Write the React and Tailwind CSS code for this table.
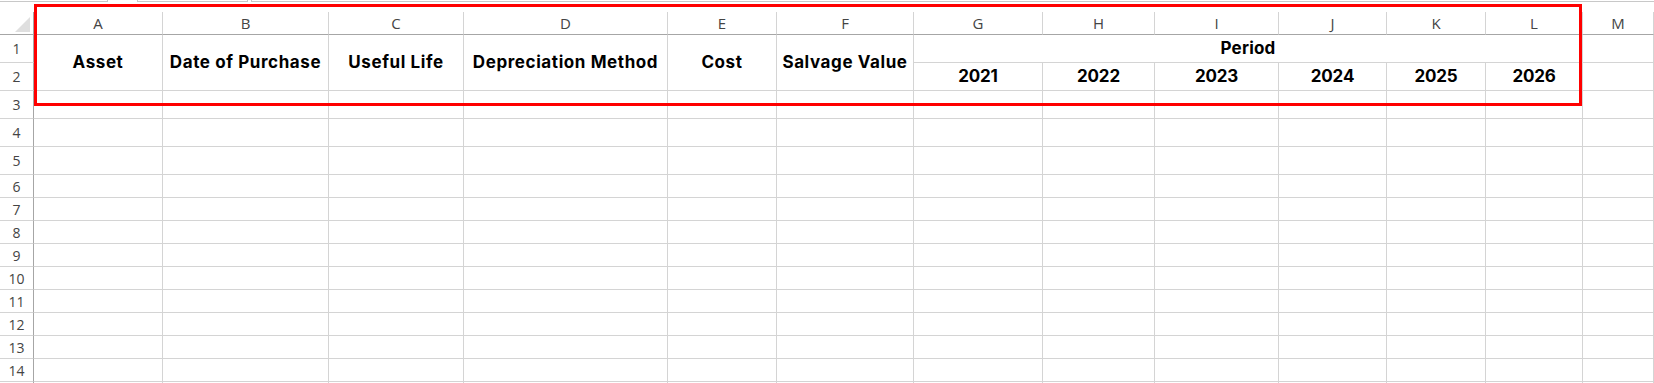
import React from 'react';

const cols = ['A', 'B', 'C', 'D', 'E', 'F', 'G', 'H', 'I', 'J', 'K', 'L', 'M'];
const heads = ['Asset', 'Date of Purchase', 'Useful Life', 'Depreciation Method', 'Cost', 'Salvage Value'];
const years = ['2021', '2022', '2023', '2024', '2025', '2026'];
const bodyRows = [3, 4, 5, 6, 7, 8, 9, 10, 11, 12, 13, 14];

const cell = 'border-r border-b border-[#d4d4d4]';
const rowHead = 'flex items-center justify-center border-r border-r-[#a6a6a6] border-b border-b-[#d4d4d4] text-[14px] text-[#444]';
const bold = "flex items-center justify-center font-['Inter',sans-serif] font-bold text-[17px] text-black";

const App = () => {
    return (
        <div className="relative w-[1654px] h-[383px] overflow-hidden bg-white" style={{ fontFamily: '"Open Sans", "Liberation Sans", sans-serif' }}>
            {/* remains of the formula bar */}
            <div className="flex h-[2px]">
                <div className="w-[108px] border-r border-b border-[#c8c8c8]" />
                <div className="ml-[29px] w-[111px] border-x border-b border-[#c8c8c8]" />
                <div className="ml-[3px] flex-1 border-l border-b border-[#c8c8c8]" />
            </div>
            <div className="h-[10px]" />

            <div className="grid grid-cols-[34px_129px_166px_135px_204px_109px_137px_129px_112px_124px_108px_99px_97px_1fr] grid-rows-[23px_28px_28px_28px_28px_28px_repeat(9,23px)_23px]">
                {/* column header row */}
                <div className="relative border-r border-r-[#a6a6a6] border-b border-b-[#a6a6a6]">
                    <svg className="absolute left-[15px] top-[5px]" width="15" height="15" viewBox="0 0 15 15">
                        <polygon points="15,0 15,15 0,15" fill="#dfdfdf" />
                    </svg>
                </div>
                {cols.map(c => (
                    <div key={c} className="flex items-center justify-center border-r border-r-[#d4d4d4] border-b border-b-[#a6a6a6] text-[15px] text-[#444]">
                        {c}
                    </div>
                ))}

                {/* rows 1 and 2 */}
                <div className={rowHead}>1</div>
                {heads.map(h => (
                    <div key={h} className={`${cell} ${bold} row-span-2 tracking-[0.035em]`}>{h}</div>
                ))}
                <div className={`${cell} ${bold} col-span-6 tracking-[0.01em]`}>Period</div>
                <div className={cell} />

                <div className={rowHead}>2</div>
                {years.map(y => (
                    <div key={y} className={`${cell} ${bold} tracking-[-0.01em]`}>{y}</div>
                ))}
                <div className={cell} />

                {bodyRows.map(r => (
                    <React.Fragment key={r}>
                        <div className={rowHead}>{r}</div>
                        {cols.map(c => <div key={c} className={cell} />)}
                    </React.Fragment>
                ))}
                {/* row 15, only its top edge shows */}
                <div className="border-r border-r-[#a6a6a6]" />
                {cols.map(c => <div key={c} className="border-r border-[#d4d4d4]" />)}
            </div>

            {/* red highlight round the header block */}
            <div className="absolute left-[34px] top-[4px] w-[1548px] h-[102px] border-[3px] border-[#ff0000] pointer-events-none" />
        </div>
    );
};

export default App;
